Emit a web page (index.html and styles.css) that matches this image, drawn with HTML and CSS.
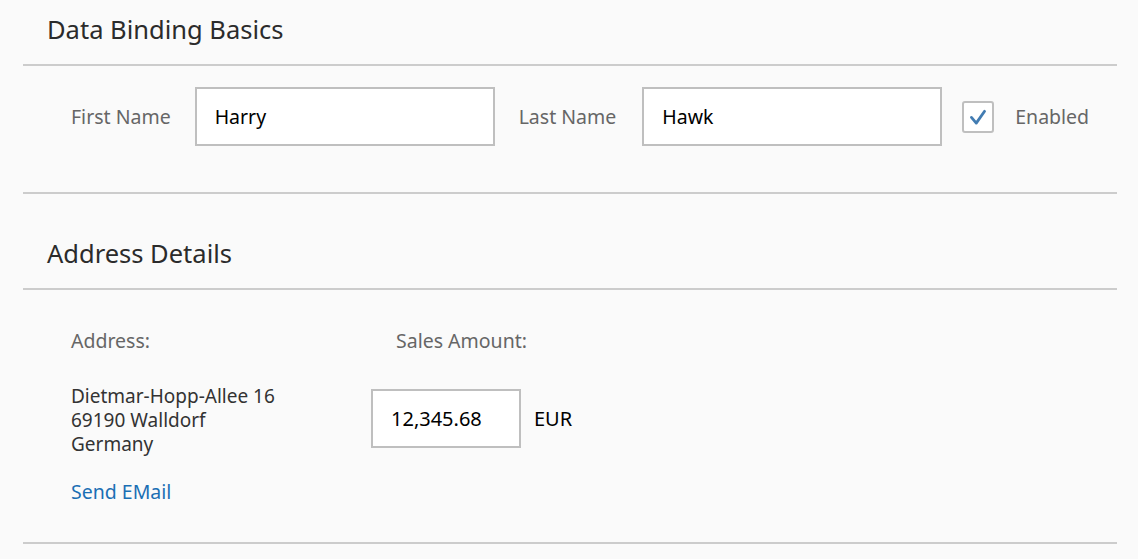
FILE: index.html
```html
<!DOCTYPE html>
<html lang="en">
<head>
<meta charset="utf-8">
<title>Data Binding Basics</title>
<link rel="stylesheet" href="styles.css">
</head>
<body>
<div class="panel">
  <div class="panel-title">Data Binding Basics</div>
  <div class="panel-body name-row">
    <label class="label">First Name</label>
    <div class="input"><span>Harry</span></div>
    <label class="label last">Last Name</label>
    <div class="input"><span>Hawk</span></div>
    <div class="checkbox">
      <svg viewBox="0 0 32 32" width="32" height="32">
        <path d="M8.5 16.5 L14 23 L23.5 9.5" fill="none" stroke="#427cb2" stroke-width="3.2" stroke-linecap="round" stroke-linejoin="round"/>
      </svg>
    </div>
    <span class="label enabled">Enabled</span>
  </div>
</div>
<div class="panel second">
  <div class="panel-title">Address Details</div>
  <div class="panel-body address-body">
    <div class="col col-address">
      <div class="label">Address:</div>
      <div class="address">
        <div class="address-line">Dietmar-Hopp-Allee 16</div>
        <div class="address-line">69190 Walldorf</div>
        <div class="address-line">Germany</div>
      </div>
      <a class="link" href="#">Send EMail</a>
    </div>
    <div class="col col-sales">
      <div class="label sales-label">Sales Amount:</div>
      <div class="amount-row">
        <div class="input amount"><span>12,345.68</span></div>
        <span class="currency">EUR</span>
      </div>
    </div>
  </div>
</div>
</body>
</html>
```

FILE: styles.css
```css
html, body {
  margin: 0;
  padding: 0;
}
body {
  background: #fafafa;
  font-family: "Noto Sans", "Open Sans", sans-serif;
  color: #333;
  width: 1138px;
  height: 559px;
  overflow: hidden;
}
.panel {
  margin: 0 21px 0 23px;
  border-bottom: 2px solid #cccccc;
}
.panel.second {
  margin-top: 30px;
}
.panel-title {
  height: 66px;
  box-sizing: border-box;
  display: flex;
  align-items: center;
  padding: 0 0 6px 24px;
  border-bottom: 2px solid #cccccc;
  font-size: 25.5px;
  color: #2b2b2b;
}
.label {
  color: #666;
  font-size: 19.5px;
}
.name-row {
  display: flex;
  align-items: center;
  padding: 21px 0 46px 48px;
}
.input {
  width: 300px;
  height: 59px;
  box-sizing: border-box;
  border: 2px solid #bfbfbf;
  background: #fff;
  display: flex;
  align-items: center;
  padding-left: 18px;
  font-size: 19.5px;
  color: #000;
}
.name-row .label { margin-right: 24px; }
.name-row .label.last { margin-left: 24px; margin-right: 26px; }
.checkbox {
  width: 32px;
  height: 32px;
  box-sizing: border-box;
  border: 2px solid #bfbfbf;
  border-radius: 3px;
  background: #fff;
  margin-left: 20px;
  display: flex;
  align-items: center;
  justify-content: center;
}
.checkbox svg { display: block; }
.name-row .enabled { margin-left: 21px; margin-right: 0; }
.address-body {
  display: flex;
  padding: 37px 0 38px 48px;
}
.col { display: flex; flex-direction: column; }
.col-address { width: 300px; }
.address {
  margin-top: 30px;
  font-size: 19px;
  color: #333;
}
.address-line {
  height: 24px;
  line-height: 24px;
}
.link {
  margin-top: 24px;
  font-size: 19.5px;
  color: #1a6fb4;
  text-decoration: none;
  line-height: 24px;
}
.sales-label { margin-left: 25px; }
.amount-row {
  display: flex;
  align-items: center;
  margin-top: 35px;
}
.amount {
  width: 150px;
  font-size: 20px;
}
.currency {
  margin-left: 13px;
  font-size: 20px;
  color: #000;
}
```
